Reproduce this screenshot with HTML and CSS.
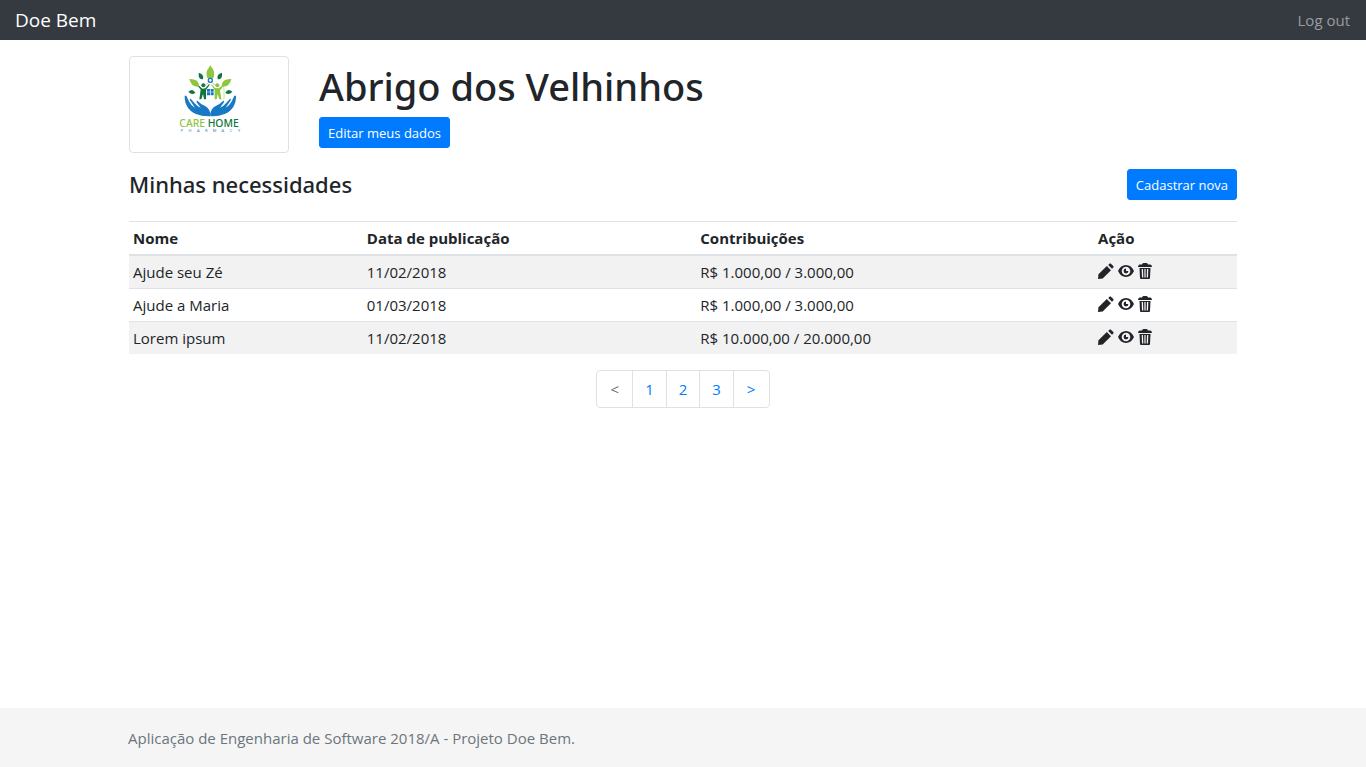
FILE: index.html
```html
<!DOCTYPE html>
<html lang="pt-BR">
<head>
<meta charset="utf-8">
<meta name="viewport" content="width=device-width, initial-scale=1">
<title>Doe Bem</title>
<link rel="stylesheet" href="styles.css">
</head>
<body>
<svg class="sprite" aria-hidden="true">
  <symbol id="pencil" viewBox="0 0 16 16"><path d="M0 16l.5-4.700L8.800 3l4.200 4.200L4.700 15.500z"/><path d="M10.200 1.900l1.300-1.200q.7-.7 1.400 0l2.400 2.400q.7.700 0 1.400L14 5.700z"/></symbol>
  <symbol id="eye" viewBox="0 0 16 16"><path fill-rule="evenodd" d="M8 2C4.500 2 1.700 4.300 0 8c1.700 3.700 4.500 6 8 6s6.300-2.300 8-6c-1.700-3.700-4.500-6-8-6zm0 1.700a4.300 4.300 0 1 1 0 8.600 4.300 4.300 0 0 1 0-8.600z"/><path d="M8 5.600A2.400 2.400 0 1 0 10.400 8H8z"/></symbol>
  <symbol id="trash" viewBox="0 0 14 16"><path fill-rule="evenodd" d="M4 1.500Q4.300 0 5.500 0h3Q9.700 0 10 1.500h2.500Q14 2 14 4H0Q0 2 1.500 1.500zM1.500 5h11L12 15q0 1-1 1H3q-1 0-1-1zM3.700 6l.3 8.500h1.300L5 6zm2.700 0v8.500h1.200V6zM9 6l-.3 8.500H10l.3-8.500z"/></symbol>
</svg>

<header class="navbar">
  <a class="brand" href="#">Doe Bem</a>
  <a class="logout" href="#">Log out</a>
</header>

<main class="container">
  <section class="profile">
    <div class="thumbnail">
      <svg class="logo" viewBox="-3 0 240 267" role="img" aria-label="Care Home Pharmacy">
        <g fill="#8dc63f">
          <path d="M121 16q-22 28-4 43l4 1 4-1q18-15-4-43z"/>
          <path d="M58 57q27-1 29 19l-2 4q-22 1-27-23z"/>
          <path d="M184 57q-27-1-29 19l2 4q22 1 27-23z"/>
        </g>
        <g fill="#11763d">
          <path d="M86 38q17 4 13 20-15 1-13-20z"/>
          <path d="M156 38q-17 4-13 20 15 1 13-20z"/>
          <path d="M55 95q13-12 21 3-10 10-21-3z"/>
          <path d="M187 95q-13-12-21 3 10 10 21-3z"/>
          <circle cx="100" cy="76" r="6"/>
          <path d="M87 77l10 9 9-1 11-13 2 2-11 16v28h-6l-3-16-5 16h-6l4-29-8-10z"/>
        </g>
        <g fill="#8dc63f">
          <circle cx="142" cy="76" r="6"/>
          <path d="M125 72l10 12 11 1 10-8 2 3-8 11 4 27h-6l-5-16-3 16h-6V90l-10-15z"/>
        </g>
        <path d="M153 88q0-8 5-8t4 9v28" fill="none" stroke="#8dc63f" stroke-width="1.500"/>
        <path d="M103 78l18-15 18 15" fill="none" stroke="#8fae8f" stroke-width="2"/>
        <circle cx="121" cy="61" r="6" fill="#fff" stroke="#1c75bc" stroke-width="4"/>
        <path d="M111 87h9v8h-9zm11 0h9v8h-9zm-11 10h9v9h-9zm11 0h9v9h-9z" fill="#1c75bc"/>
        <g fill="#1779c4">
          <path id="hand" d="M44 107q-1 39 34 55 18 8 43 7v-9q-3-15-16-22-12-5-23-16-4 0-2 5l12 16q-10-3-18-13l-12-14q-5 0-2 5l15 22q-13-7-20-23l-6-13z"/>
          <use href="#hand" transform="matrix(-1 0 0 1 242 0)"/>
        </g>
        <text class="logo-name" x="28" y="200"><tspan fill="#8dc63f">CARE</tspan> <tspan fill="#11763d">HOME</tspan></text>
        <g class="logo-sub">
          <text x="36" y="217">P</text><text x="60" y="217">H</text><text x="85" y="217">A</text><text x="109" y="217">R</text><text x="134" y="217">M</text><text x="158" y="217">A</text><text x="183" y="217">C</text><text x="207" y="217">Y</text>
        </g>
      </svg>
    </div>
    <div class="profile-info">
      <h1>Abrigo dos Velhinhos</h1>
      <button class="btn" type="button">Editar meus dados</button>
    </div>
  </section>

  <section class="needs-header">
    <h2>Minhas necessidades</h2>
    <button class="btn" type="button">Cadastrar nova</button>
  </section>

  <table class="needs">
    <colgroup><col class="col-name"><col class="col-date"><col class="col-amount"><col class="col-action"></colgroup>
    <thead>
      <tr><th scope="col">Nome</th><th scope="col">Data de publicação</th><th scope="col">Contribuições</th><th scope="col">Ação</th></tr>
    </thead>
    <tbody>
      <tr><td>Ajude seu Zé</td><td>11/02/2018</td><td>R$ 1.000,00 / 3.000,00</td><td><div class="actions"><a href="#" aria-label="Editar"><svg class="icon"><use href="#pencil"/></svg></a><a href="#" aria-label="Ver"><svg class="icon"><use href="#eye"/></svg></a><a href="#" aria-label="Excluir"><svg class="icon icon-trash"><use href="#trash"/></svg></a></div></td></tr>
      <tr><td>Ajude a Maria</td><td>01/03/2018</td><td>R$ 1.000,00 / 3.000,00</td><td><div class="actions"><a href="#" aria-label="Editar"><svg class="icon"><use href="#pencil"/></svg></a><a href="#" aria-label="Ver"><svg class="icon"><use href="#eye"/></svg></a><a href="#" aria-label="Excluir"><svg class="icon icon-trash"><use href="#trash"/></svg></a></div></td></tr>
      <tr><td>Lorem ipsum</td><td>11/02/2018</td><td>R$ 10.000,00 / 20.000,00</td><td><div class="actions"><a href="#" aria-label="Editar"><svg class="icon"><use href="#pencil"/></svg></a><a href="#" aria-label="Ver"><svg class="icon"><use href="#eye"/></svg></a><a href="#" aria-label="Excluir"><svg class="icon icon-trash"><use href="#trash"/></svg></a></div></td></tr>
    </tbody>
  </table>

  <nav class="pagination" aria-label="Paginação">
    <a class="disabled" href="#" aria-disabled="true">&lt;</a>
    <a href="#">1</a>
    <a href="#">2</a>
    <a href="#">3</a>
    <a href="#">&gt;</a>
  </nav>
</main>

<footer class="footer">
  <div class="footer-inner">Aplicação de Engenharia de Software 2018/A - Projeto Doe Bem.</div>
</footer>
</body>
</html>
```
FILE: styles.css
```css
*, *::before, *::after { box-sizing: border-box; }

body {
  margin: 0;
  min-height: 100vh;
  display: flex;
  flex-direction: column;
  font-family: "Segoe UI", "Open Sans", "Noto Sans", sans-serif;
  font-size: 15px;
  line-height: 24px;
  color: #212529;
  background: #fff;
}

a { color: #007bff; text-decoration: none; }

.sprite { display: none; }

.navbar {
  display: flex;
  justify-content: space-between;
  align-items: center;
  height: 40px;
  padding: 0 16px 0 15px;
  background: #343a40;
}
.brand { font-size: 19px; color: #fff; }
.logout { color: #9a9da0; }

.container {
  width: 100%;
  max-width: 1140px;
  margin: 0 auto;
  padding: 16px;
  flex: 1;
}

.profile { display: flex; gap: 30px; }

.thumbnail {
  width: 160px;
  padding: 3px;
  border: 1px solid #dee2e6;
  border-radius: 4px;
  text-align: center;
}
.logo { display: block; width: 80px; height: 89px; margin: 0 auto; }
.logo-name { font: 500 31px "Noto Sans", sans-serif; }
.logo-sub { font: 12px "Open Sans", sans-serif; fill: #1c75bc; text-anchor: middle; }

.profile-info { padding-top: 6px; }

h1, h2 { margin: 0; font-family: "Segoe UI", "Noto Sans", sans-serif; font-weight: 500; }
h1 { margin-bottom: 7px; font-size: 38px; line-height: 48px; }
h2 { font-size: 22px; line-height: 31px; }

.btn {
  display: block;
  height: 31px;
  padding: 1px 8px 0;
  border: 1px solid #007bff;
  border-radius: 3px;
  background: #007bff;
  color: #fff;
  font-family: inherit;
  font-size: 13px;
  line-height: 21px;
  cursor: pointer;
}

.needs-header {
  display: flex;
  justify-content: space-between;
  margin: 16px 0 21px;
}

.needs {
  width: 100%;
  table-layout: fixed;
  border-collapse: collapse;
}
.needs th, .needs td {
  padding: 4px;
  border-top: 1px solid #dee2e6;
  text-align: left;
}
.needs thead th { border-bottom: 2px solid #dee2e6; font-weight: 700; }
.needs tbody tr:nth-child(odd) { background: #f2f2f2; }
.col-name { width: 21.1%; }
.col-date { width: 30.1%; }
.col-amount { width: 35.9%; }
.col-action { width: 12.9%; }

.actions { display: flex; align-items: center; gap: 4px; height: 24px; padding-bottom: 2px; }
.actions a { display: flex; color: inherit; }
.icon { width: 16px; height: 16px; fill: currentColor; }
.icon-trash { width: 14px; }

.pagination {
  display: flex;
  justify-content: center;
  margin-top: 16px;
}
.pagination a {
  padding: 6px 12px;
  border: 1px solid #dee2e6;
  margin-left: -1px;
}
.pagination a:first-child { margin-left: 0; padding: 6px 13px 6px 14px; border-radius: 4px 0 0 4px; }
.pagination a:last-child { padding: 6px 14px 6px 13px; border-radius: 0 4px 4px 0; }
.pagination .disabled { color: #6c757d; }

.footer { background: #f5f5f5; color: #6c757d; }
.footer-inner {
  max-width: 1140px;
  margin: 0 auto;
  padding: 18px 15px 17px;
}
```
